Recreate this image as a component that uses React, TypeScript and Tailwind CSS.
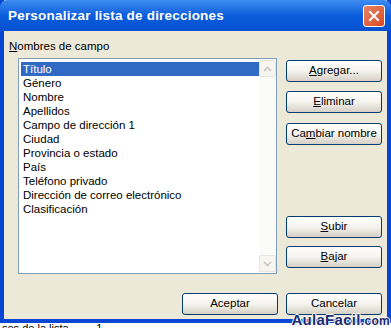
import React from "react";

const fields = [
  "Título",
  "Género",
  "Nombre",
  "Apellidos",
  "Campo de dirección 1",
  "Ciudad",
  "Provincia o estado",
  "País",
  "Teléfono privado",
  "Dirección de correo electrónico",
  "Clasificación",
];

function XpButton({ children, className = "" }: { children: React.ReactNode; className?: string }) {
  return (
    <button
      className={`flex h-[22px] w-[96px] items-center justify-center rounded-[3px] border border-[#003c74] bg-gradient-to-b from-[#ffffff] via-[#f4f3ee] to-[#d6d0c5] text-[11.5px] text-black ${className}`}
    >
      {children}
    </button>
  );
}

function ScrollArrow({ up }: { up: boolean }) {
  return (
    <div className="flex h-[17px] w-[17px] items-center justify-center rounded-[2px] border border-[#e8e6dc] bg-[#f6f5f0]">
      <svg width="9" height="6" viewBox="0 0 9 6">
        <path
          d={up ? "M1 5 L4.5 1.5 L8 5" : "M1 1 L4.5 4.5 L8 1"}
          fill="none"
          stroke="#c9c7ba"
          strokeWidth="1.6"
        />
      </svg>
    </div>
  );
}

export default function App() {
  return (
    <div className="relative h-[328px] w-[391px] overflow-hidden bg-white font-['Liberation_Sans',Arial,sans-serif]">
      <div className="flex h-[323px] flex-col border-x-[4px] border-b-[4px] border-[#0846d4] bg-[#ece9d8]">
        {/* title bar */}
        <div className="-mx-[4px] flex h-[31px] shrink-0 items-center justify-between rounded-t-[7px] bg-gradient-to-b from-[#3d8cf0] via-[#0a5ddc] to-[#0550d0] pl-[8px] pr-[6px]">
          <span className="pt-[2px] text-[13.5px] font-bold tracking-[0.2px] text-white">
            Personalizar lista de direcciones
          </span>
          <div className="flex h-[22px] w-[22px] items-center justify-center rounded-[3px] border border-white bg-gradient-to-br from-[#e98463] to-[#d8461f]">
            <svg width="12" height="12" viewBox="0 0 12 12">
              <path d="M2 2 L10 10 M10 2 L2 10" stroke="white" strokeWidth="2" strokeLinecap="square" />
            </svg>
          </div>
        </div>

        {/* body */}
        <div className="flex flex-1 flex-col px-[5px] pt-[9px]">
          <div className="h-[18px] text-[11.5px] leading-[13px] text-black">
            <span className="underline">N</span>ombres de campo
          </div>
          <div className="flex gap-[9px] pl-[9px]">
            <div className="flex h-[216px] w-[260px] border border-[#7f9db9] bg-white">
              <div className="flex-1 pl-[2px] pt-[3px]">
                {fields.map((f, i) => (
                  <div
                    key={f}
                    className={`h-[14px] pl-[2px] text-[11.5px] leading-[14px] ${
                      i === 0 ? "bg-[#316ac5] text-white" : "text-black"
                    }`}
                  >
                    {f}
                  </div>
                ))}
              </div>
              <div className="flex w-[17px] flex-col justify-between bg-[#fbfbf9] py-[1px]">
                <ScrollArrow up />
                <ScrollArrow up={false} />
              </div>
            </div>
            <div className="flex flex-col pt-[2px]">
              <XpButton>
                <span>
                  <span className="underline">A</span>gregar...
                </span>
              </XpButton>
              <XpButton className="mt-[9px]">
                <span>
                  <span className="underline">E</span>liminar
                </span>
              </XpButton>
              <XpButton className="mt-[10px]">
                <span>
                  Ca<span className="underline">m</span>biar nombre
                </span>
              </XpButton>
              <XpButton className="mt-[71px]">
                <span>
                  <span className="underline">S</span>ubir
                </span>
              </XpButton>
              <XpButton className="mt-[8px]">
                <span>
                  <span className="underline">B</span>ajar
                </span>
              </XpButton>
            </div>
          </div>
          <div className="mt-[19px] flex justify-end gap-[8px]">
            <XpButton>Aceptar</XpButton>
            <XpButton>Cancelar</XpButton>
          </div>
        </div>
      </div>
      <div className="h-[5px] overflow-hidden pl-[2px] text-[11px] leading-[11px] text-black">
        ses de la lista &nbsp;&nbsp;&nbsp;&nbsp;&nbsp;&nbsp;&nbsp;&nbsp;1
      </div>
      <div className="absolute bottom-[-3px] right-[1px] text-[15px] font-bold tracking-[0.3px] text-[#1b2c6e] [text-shadow:1px_0_0_#fff,-1px_0_0_#fff,0_1px_0_#fff,0_-1px_0_#fff]">
        AulaFacil<span className="text-[12px]">.com</span>
      </div>
    </div>
  );
}
